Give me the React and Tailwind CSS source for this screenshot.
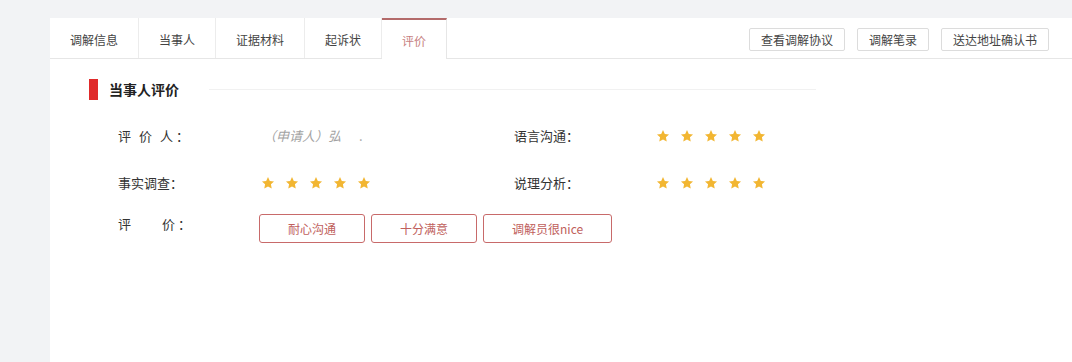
import React from "react";

const font = { fontFamily: '"Noto Sans CJK SC", "Noto Sans", sans-serif' };

function Star() {
  return (
    <svg width="14" height="14" viewBox="0 0 24 24" className="block">
      <path
        d="M12 1.8l3.1 6.6 7.2.9-5.3 5 1.4 7.1L12 17.9l-6.4 3.5L7 14.3l-5.3-5 7.2-.9z"
        fill="#f2b632"
      />
    </svg>
  );
}

function Stars() {
  return (
    <div className="flex gap-[10px] items-center h-[20px]">
      {[0, 1, 2, 3, 4].map((i) => (
        <Star key={i} />
      ))}
    </div>
  );
}

const tabs = ["调解信息", "当事人", "证据材料", "起诉状", "评价"];

export default function App() {
  return (
    <div className="min-h-[362px] bg-[#f2f3f5] pt-[18px] pl-[50px]" style={font}>
      <div className="bg-white min-h-[344px]">
        <div className="flex justify-between h-[41px] border-b border-[#e6e6e6]">
          <div className="flex">
            {tabs.map((t, i) => {
              const active = i === tabs.length - 1;
              return (
                <div
                  key={t}
                  className={
                    active
                      ? "px-5 flex items-center pt-[3px] text-[12px] text-[#c77f7f] border-t-[2px] border-[#b36a6a] border-r border-r-[#e6e6e6] bg-white -mb-px"
                      : "px-5 flex items-center pt-[3px] text-[12px] text-[#444] border-r border-[#ececec]"
                  }
                >
                  {t}
                </div>
              );
            })}
          </div>
          <div className="flex items-center gap-3 pr-[23px] pt-[3px]">
            {["查看调解协议", "调解笔录", "送达地址确认书"].map((b) => (
              <div
                key={b}
                className="h-[23px] px-[11px] flex items-center border border-[#dcdcdc] text-[12px] text-[#444] rounded-[2px]"
              >
                {b}
              </div>
            ))}
          </div>
        </div>

        <div className="pl-[39px] pt-[20px]">
          <div className="flex items-center h-[21px]">
            <div className="w-[9px] h-[21px] bg-[#e02a2a]" />
            <div className="ml-[11px] text-[14px] font-bold text-[#222]">当事人评价</div>
            <div className="ml-[30px] w-[607px] h-px bg-[#f1f1f1]" />
          </div>

          <div className="ml-[29px] mt-[26px] grid grid-cols-[396px_auto]">
            <div className="flex items-center h-[20px] text-[13px] text-[#333]">
              <div className="w-[145px] flex items-center">
                <div className="w-[55px] flex justify-between">
                  <span>评</span>
                  <span>价</span>
                  <span>人</span>
                </div>
                <span className="ml-[3px]">：</span>
              </div>
              <span className="text-[#a3a3a3] italic">（申请人）弘</span>
              <span className="text-[#a3a3a3] ml-[18px]">.</span>
            </div>
            <div className="flex items-center h-[20px] text-[13px] text-[#333]">
              <div className="w-[142px]">语言沟通：</div>
              <Stars />
            </div>
          </div>

          <div className="ml-[29px] mt-[27px] grid grid-cols-[396px_auto]">
            <div className="flex items-center h-[20px] text-[13px] text-[#333]">
              <div className="w-[143px]">事实调查：</div>
              <Stars />
            </div>
            <div className="flex items-center h-[20px] text-[13px] text-[#333]">
              <div className="w-[142px]">说理分析：</div>
              <Stars />
            </div>
          </div>

          <div className="ml-[29px] mt-[21px] flex items-start">
            <div className="w-[141px] h-[20px] flex items-center text-[13px] text-[#333]">
              <div className="w-[57px] flex justify-between">
                <span>评</span>
                <span>价</span>
              </div>
              <span className="ml-[3px]">：</span>
            </div>
            <div className="flex gap-[6px]">
              {["耐心沟通", "十分满意", "调解员很nice"].map((t) => (
                <div
                  key={t}
                  className="h-[29px] px-[28px] flex items-center border border-[#c86a6a] rounded-[3px] text-[12px] text-[#c0605c]"
                >
                  {t}
                </div>
              ))}
            </div>
          </div>
        </div>
      </div>
    </div>
  );
}
